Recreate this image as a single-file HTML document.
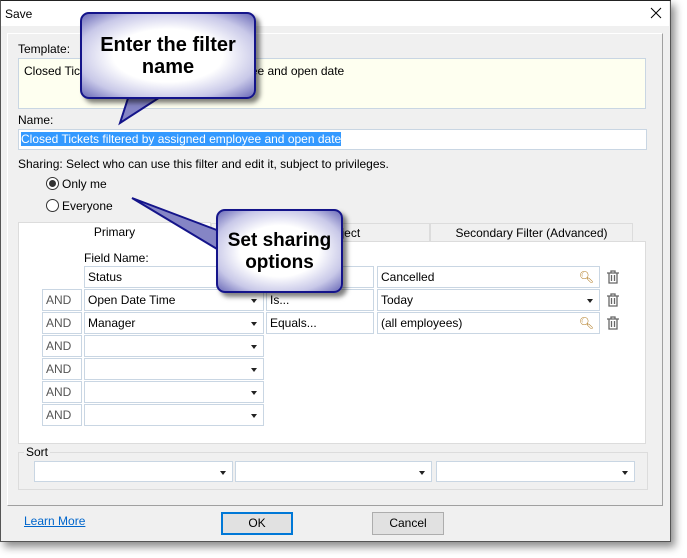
<!DOCTYPE html>
<html><head><style>
*{box-sizing:border-box;margin:0;padding:0}
body{width:687px;height:558px;background:#fff;font-family:"Liberation Sans",sans-serif;font-size:12px;color:#000;position:relative;overflow:hidden}
.a{position:absolute}
.win{left:0;top:0;width:671px;height:542px;background:#f0f0f0;border:1px solid #555;border-top:1px solid #222;box-shadow:4px 5px 8px rgba(0,0,0,.45)}
.title{left:1px;top:1px;width:668px;height:25px;background:#fff}
.inp{position:absolute;background:#fff;border:1px solid #c9d6e3;height:22px;line-height:20px;padding-left:3px;white-space:nowrap;overflow:hidden}
.and{color:#555}
.dd::after{content:"";position:absolute;right:6px;top:9px;border-left:3px solid transparent;border-right:3px solid transparent;border-top:4px solid #222}
.callout{position:absolute;border:2px solid #14148a;border-radius:9px;background:radial-gradient(ellipse at center,#fff 45%,#c8c8e8 75%,#6a6ab8 100%);box-shadow:4px 4px 5px rgba(0,0,0,.5);font-weight:bold;font-size:19px;text-align:center;line-height:22px}
</style></head><body>
<div class="a win"></div>
<div class="a title"></div>
<div class="a" style="left:5px;top:7px;font-size:12px">Save</div>
<svg class="a" style="left:650px;top:7px" width="12" height="12"><path d="M1 1L11 11M11 1L1 11" stroke="#000" stroke-width="1"/></svg>
<div class="a" style="left:7px;top:33px;width:656px;height:473px;border:1px solid #fff;border-right-color:#a0a0a0;border-bottom-color:#a0a0a0"></div>

<div class="a" style="left:18px;top:42px">Template:</div>
<div class="a" style="left:18px;top:58px;width:628px;height:51px;background:#fefff0;border:1px solid #c9d6e3;padding:5px 5px">Closed Tickets filtered by assigned employee and open date</div>
<div class="a" style="left:18px;top:113px">Name:</div>
<div class="inp" style="left:18px;top:129px;width:629px;height:21px;line-height:19px;padding-left:2px"><span style="background:#3399ff;color:#fff">Closed Tickets filtered by assigned employee and open date</span></div>
<div class="a" style="left:18px;top:157px">Sharing: Select who can use this filter and edit it, subject to privileges.</div>
<div class="a" style="left:46px;top:177px;width:13px;height:13px;border:1px solid #333;border-radius:50%;background:#fff"><div style="margin:2px;width:7px;height:7px;border-radius:50%;background:#333"></div></div>
<div class="a" style="left:62px;top:177px">Only me</div>
<div class="a" style="left:46px;top:199px;width:13px;height:13px;border:1px solid #333;border-radius:50%;background:#fff"></div>
<div class="a" style="left:62px;top:199px">Everyone</div>

<div class="a" style="left:18px;top:241px;width:628px;height:203px;background:#fff;border:1px solid #dcdcdc"></div>
<div class="a" style="left:18px;top:222px;width:193px;height:21px;background:#fff;border:1px solid #dcdcdc;border-bottom:none;text-align:center;line-height:18px">Primary</div>
<div class="a" style="left:211px;top:223px;width:219px;height:19px;background:#f0f0f0;border:1px solid #dcdcdc;line-height:18px;text-align:center;padding-left:0">Related Object</div>
<div class="a" style="left:430px;top:223px;width:203px;height:19px;background:#f0f0f0;border:1px solid #dcdcdc;text-align:center;line-height:18px">Secondary Filter (Advanced)</div>
<div class="a" style="left:84px;top:251px">Field Name:</div>

<div class="inp" style="left:84px;top:266px;width:180px">Status</div>
<div class="inp" style="left:266px;top:266px;width:108px">Equals...</div>
<div class="inp" style="left:377px;top:266px;width:223px">Cancelled<span style="position:absolute;right:5px;top:0;color:#b07a20">🔍︎</span></div>

<div class="inp and" style="left:42px;top:289px;width:40px">AND</div>
<div class="inp dd" style="left:84px;top:289px;width:180px">Open Date Time</div>
<div class="inp" style="left:266px;top:289px;width:108px">Is...</div>
<div class="inp dd" style="left:377px;top:289px;width:223px">Today</div>

<div class="inp and" style="left:42px;top:312px;width:40px">AND</div>
<div class="inp dd" style="left:84px;top:312px;width:180px">Manager</div>
<div class="inp" style="left:266px;top:312px;width:108px">Equals...</div>
<div class="inp" style="left:377px;top:312px;width:223px">(all employees)<span style="position:absolute;right:5px;top:0;color:#b07a20">🔍︎</span></div>

<div class="inp and" style="left:42px;top:335px;width:40px">AND</div><div class="inp dd" style="left:84px;top:335px;width:180px"></div>
<div class="inp and" style="left:42px;top:358px;width:40px">AND</div><div class="inp dd" style="left:84px;top:358px;width:180px"></div>
<div class="inp and" style="left:42px;top:381px;width:40px">AND</div><div class="inp dd" style="left:84px;top:381px;width:180px"></div>
<div class="inp and" style="left:42px;top:404px;width:40px">AND</div><div class="inp dd" style="left:84px;top:404px;width:180px"></div>

<svg class="a" style="left:606px;top:270px" width="14" height="60" viewBox="0 0 14 60">
<g fill="none" stroke="#666" stroke-width="1.3">
<path d="M1 3h12M5 3V1h4v2M3 3v10h8V3M5.5 5v6M8.5 5v6"/>
<path transform="translate(0,23)" d="M1 3h12M5 3V1h4v2M3 3v10h8V3M5.5 5v6M8.5 5v6"/>
<path transform="translate(0,46)" d="M1 3h12M5 3V1h4v2M3 3v10h8V3M5.5 5v6M8.5 5v6"/>
</g></svg>

<div class="a" style="left:18px;top:452px;width:630px;height:38px;border:1px solid #dcdcdc"></div>
<div class="a" style="left:24px;top:445px;background:#f0f0f0;padding:0 2px">Sort</div>
<div class="inp dd" style="left:34px;top:461px;width:199px;height:21px"></div>
<div class="inp dd" style="left:235px;top:461px;width:197px;height:21px"></div>
<div class="inp dd" style="left:436px;top:461px;width:199px;height:21px"></div>

<div class="a" style="left:24px;top:514px;color:#0066cc;text-decoration:underline">Learn More</div>
<div class="a" style="left:221px;top:512px;width:72px;height:23px;border:2px solid #0078d7;background:#e1e1e1;text-align:center;line-height:19px">OK</div>
<div class="a" style="left:372px;top:512px;width:72px;height:23px;border:1px solid #adadad;background:#e1e1e1;text-align:center;line-height:21px">Cancel</div>

<svg class="a" style="left:0;top:0" width="687" height="558">
<path d="M130 92 L120 123 L168 92 Z" fill="#8585c5" stroke="#14148a" stroke-width="2"/>
<path d="M222 232 L132 198 L222 252 Z" fill="#8585c5" stroke="#14148a" stroke-width="2"/>
</svg>
<div class="callout" style="left:80px;top:12px;width:176px;height:87px;padding-top:20px;font-size:20px">Enter the filter<br>name</div>
<div class="callout" style="left:216px;top:209px;width:127px;height:84px;padding-top:19px">Set sharing<br>options</div>
</body></html>
